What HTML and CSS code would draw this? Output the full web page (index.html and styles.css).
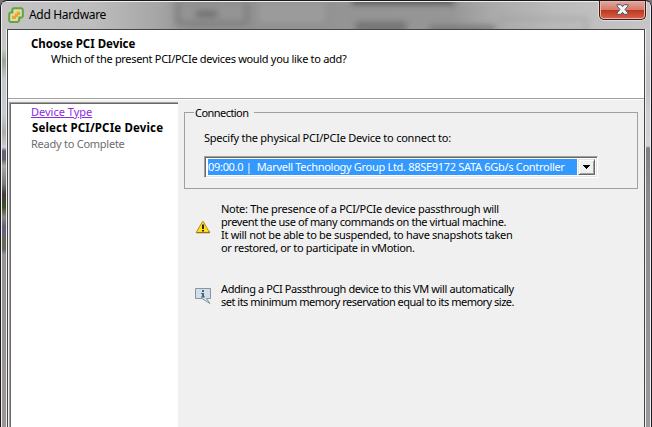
FILE: index.html
```html
<!DOCTYPE html>
<html lang="en">
<head>
<meta charset="utf-8">
<title>Add Hardware</title>
<link rel="stylesheet" href="styles.css">
</head>
<body>
<div class="window">
  <header class="titlebar">
    <div class="glass">
      <i class="blur b1"></i><i class="blur b2"></i><i class="blur b3"></i><i class="blur b4"></i><i class="blur b5"></i><i class="blur b6"></i><i class="blur b7"></i>
    </div>
    <svg class="app-icon" width="16" height="16" viewBox="0 0 16 16">
      <path d="M5.5 1.2h8.2l1.1 1.2v7l-1.2 1.2h-2.4v3l-1.3 1.3H2.3L1.2 13.700V6.800l1.200-1.200h2V2.300z" fill="#d6dccc" stroke="#67a52e" stroke-width="2" stroke-linejoin="round"/>
      <path d="M8 4h4v4h-2v2H8v2H4V8h2V6h2z" fill="#eca52b"/>
      <path d="M8 4h4v1H9v2H7v2H4V8h2V6h2z" fill="#f7cc58"/>
    </svg>
    <h1 class="title"><span class="t-title">Add Hardware</span></h1>
    <button class="close" aria-label="Close">
      <svg width="13" height="11" viewBox="0 0 13 11"><path d="M1 .7h3.800l1.700 2 1.700-2H12v1.200L9 5.500l3 3.600v1.200H8.200l-1.700-2-1.700 2H1V9.100l3-3.600-3-3.600z" fill="#f4f4f4" stroke="#515767"/></svg>
    </button>
  </header>
  <div class="body">
    <div class="edge left"></div>
    <main class="client">
      <section class="intro">
        <h2><span class="t-head">Choose PCI Device</span></h2>
        <p><span class="t-sub">Which of the present PCI/PCIe devices would you like to add?</span></p>
      </section>
      <div class="work">
        <nav class="steps">
          <a class="done"><span class="t-s1">Device Type</span></a>
          <b><span class="t-s2">Select PCI/PCIe Device</span></b>
          <span class="next"><span class="t-s3">Ready to Complete</span></span>
        </nav>
        <section class="pane">
          <fieldset>
            <legend><span class="t-leg">Connection</span></legend>
            <label><span class="t-lab">Specify the physical PCI/PCIe Device to connect to:</span></label>
            <div class="combo">
              <div class="value"><span class="t-val">09:00.0 |&nbsp; Marvell Technology Group Ltd. 88SE9172 SATA 6Gb/s Controller</span></div>
              <div class="drop"><svg width="7" height="4" viewBox="0 0 7 4" shape-rendering="crispEdges"><path d="M0 0h7v1H6v1H5v1H4v1H3V3H2V2H1V1H0z"/></svg></div>
            </div>
          </fieldset>
          <div class="note warn">
            <svg width="16" height="16" viewBox="0 0 16 16"><path d="M7.500 2.500 1.200 13.500H14.500L8.300 2.500z" fill="#ffdd20" stroke="#b98c16" stroke-linejoin="round"/><path d="M1.500 13.800h13L14 12" fill="none" stroke="#806010" stroke-width=".8"/><path d="M7 5.500h2v4.500H7zM7 11h2v1.600H7z" fill="#302800"/></svg>
            <p><span class="line t-n1">Note: The presence of a PCI/PCIe device passthrough will</span><span class="line t-n2">prevent the use of many commands on the virtual machine.</span><span class="line t-n3">It will not be able to be suspended, to have snapshots taken</span><span class="line t-n4">or restored, or to participate in vMotion.</span></p>
          </div>
          <div class="note info">
            <svg width="16" height="17" viewBox="0 0 16 17"><path d="M15.500.500H.500v10h6.500l8 5-3.500-5h4z" fill="#cfdfec" stroke="#8b949b"/><path d="M7 2h2v2H7zM6 5h3v3.500h1v1H6v-1h1V6H6z" fill="#53616d"/></svg>
            <p><span class="line t-n5">Adding a PCI Passthrough device to this VM will automatically</span><span class="line t-n6">set its minimum memory reservation equal to its memory size.</span></p>
          </div>
        </section>
      </div>
    </main>
    <div class="edge right"></div>
  </div>
</div>
</body>
</html>
```
FILE: styles.css
```css
* { box-sizing: border-box; }
body { margin: 0; background: #777; font: 11px/13px "Noto Sans", sans-serif; color: #000; overflow: hidden; }
h1, h2, p { margin: 0; font-size: inherit; }
svg { display: block; flex: none; }
span { white-space: pre; }
.line { display: block; height: 13px; }
.t-title { letter-spacing: -.33px; }
.t-head { font-size: 11.5px; letter-spacing: -.02px; }
.t-sub { letter-spacing: -.31px; }
.t-s2 { font-size: 11.5px; letter-spacing: .15px; margin-left: 1px; }
.t-s3 { letter-spacing: -.25px; }
.t-leg { letter-spacing: -.55px; }
.t-lab { letter-spacing: -.24px; }
.t-val { letter-spacing: -.3px; }
.t-n1 { letter-spacing: -.29px; }
.t-n2 { letter-spacing: -.41px; }
.t-n3 { letter-spacing: -.3px; }
.t-n4 { letter-spacing: -.33px; }
.t-n5 { letter-spacing: -.4px; }
.t-n6 { letter-spacing: -.5px; }
.window { width: 652px; height: 427px; display: flex; flex-direction: column; background: #aaa; border-top: 1px solid #1c1820; border-radius: 7px 7px 0 0; overflow: hidden; box-shadow: inset 1px 0 #1c1820, inset -1px 0 #1c1820; }
.titlebar { position: relative; flex: 0 0 28px; display: flex; align-items: flex-start; border: 1px solid #eee; border-width: 1px 1px 0; margin: 0 1px; border-radius: 6px 6px 0 0; }
.glass { position: absolute; inset: 0; overflow: hidden; background: linear-gradient(90deg, #c4c4c4 0, #bebebe 90px, #a6a6a6 155px, #929292 190px, #969696 450px, #aaa 490px, #bababa 550px, #c6c6c6 650px); }
.blur { position: absolute; filter: blur(3px); }
.b1 { left: 174px; top: -2px; width: 72px; height: 25px; border: 3px solid #747474; border-top-color: #8a8a8a; background: #949494; }
.b2 { left: 194px; top: 9px; width: 21px; height: 6px; background: #6c6c6c; }
.b3 { left: 253px; top: -3px; width: 74px; height: 27px; border: 2px solid #888; background: #9b9b9b; }
.b4 { left: 350px; top: -6px; width: 102px; height: 8px; background: #555; }
.b5 { left: 354px; top: 20px; width: 50px; height: 9px; background: #727272; }
.b6 { left: 428px; top: 24px; width: 65px; height: 5px; background: #707070; }
.b7 { left: 497px; top: 16px; width: 88px; height: 15px; border: 2px solid #9c9c9c; }
.app-icon { position: relative; margin: 5px 0 0 6px; }
.title { position: relative; margin: 5px 0 0 5px; font: 12px/16px "Noto Sans", sans-serif; }
.close { position: relative; margin: -1px 4px 0 auto; width: 47px; height: 19px; padding: 0 0 1px; display: flex; align-items: center; justify-content: center; border: 1px solid #3a1b1d; border-top: 0; border-radius: 0 0 5px 5px; background: linear-gradient(#e1a89b 0, #d47a6a 48%, #bd351b 50%, #d7644a 100%); box-shadow: inset 0 0 0 1px #edb4a7, 0 1px #ddd, 1px 0 #ddd, -1px 0 #ddd; }
.body { flex: 1; display: flex; min-height: 0; }
.edge { flex: none; width: 6px; border: solid #f0f0f0; border-width: 0 1px; }
.left { margin-left: 1px; background: linear-gradient(#c4c4c4 0, #c6c8c6 20px, #97a596 32px, #c4c9cf 50px, #c5ccd6 85px, #aaa 103px, #c5c3c6 115px, #d3d2d6 118px, #656078 122px, #656070 130px, #aaa 137px, #777 155px, #403c3f 165px, #3d5120 178px, #888 188px, #65627c 197px, #66607c 203px, #607052 212px, #666 220px, #989494 226px, #9a9494 100%); }
.right { margin-right: 1px; background: linear-gradient(#c8c8c8 0, #c2c2c2 60px, #cfcfcf 85px, #d2d2d2 117px, #808080 119px, #8b8b8b 165px, #9a9a9a 100%); }
.client { flex: 1; display: flex; flex-direction: column; background: #f0f0f0; border: 1px solid #454545; border-width: 1px 1px 0; box-shadow: 0 -1px #ddd; }
.intro { height: 69px; background: #fff; border-bottom: 1px solid #a0a0a0; padding: 7px 0 0 23px; }
.intro p { padding: 2px 0 0 20px; }
.work { flex: 1; display: flex; border-top: 1px solid #fff; padding: 2px 0 0 1px; }
.steps { width: 169px; display: flex; flex-direction: column; align-items: flex-start; gap: 3px; padding: 2px 0 0 21px; background: #fff; border: solid #a0a0a0; border-width: 1px 0 0 1px; box-shadow: inset 1px 1px #696969; }
.done { color: #8a2be2; text-decoration: underline; }
.next { color: #6d6d6d; }
.pane { flex: 1; padding: 4px 6px 0; }
fieldset { height: 83px; margin: 0; min-width: 0; border: 1px solid #a0a0a0; padding: 12px 0 0 19px; }
legend { margin-left: -10px; width: 60px; padding: 0 0 0 1px; }
.combo { width: 394px; height: 22px; margin-top: 12px; display: flex; background: #fff; border: 1px solid; border-color: #a0a0a0 #fff #fff #a0a0a0; box-shadow: inset 1px 1px #696969, inset -1px -1px #e3e3e3; padding: 2px; }
.value { flex: 1; min-width: 0; margin: 0 1px; background: #39f; color: #fff; line-height: 16px; }
.drop { width: 17px; display: flex; align-items: center; justify-content: center; background: #f0f0f0; border: 1px solid; border-color: #e3e3e3 #696969 #696969 #e3e3e3; box-shadow: inset 1px 1px #fff, inset -1px -1px #a0a0a0; }
.note { display: flex; gap: 10px; margin-left: 11px; }
.warn { margin-top: 13px; }
.warn svg { margin-top: 17px; }
.info { margin-top: 28px; }
.info svg { margin-top: 6px; }
```
